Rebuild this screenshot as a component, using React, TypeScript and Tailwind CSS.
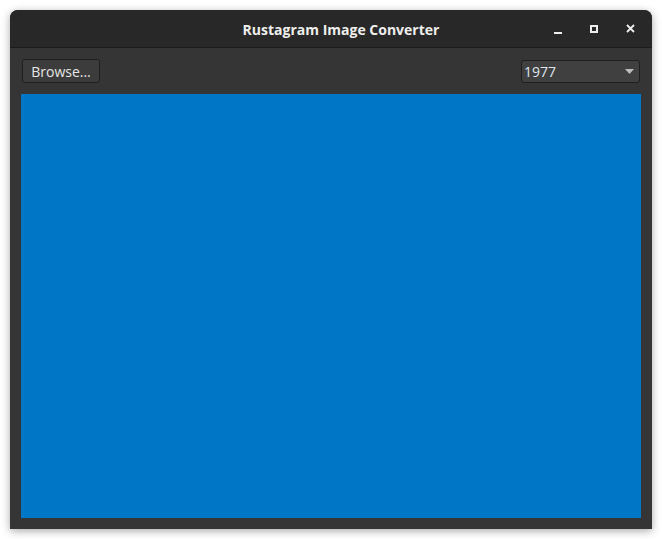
export default function App() {
  return (
    <div className="h-[539px] w-[662px] bg-white" style={{ fontFamily: '"Open Sans", "Noto Sans", sans-serif' }}>
      <div className="pl-[10px] pt-[10px]">
        <div className="flex h-[519px] w-[642px] flex-col overflow-hidden rounded-t-[8px] bg-[#353535] shadow-[0_2px_8px_rgba(0,0,0,0.35)]">
          {/* Title bar */}
          <div className="relative flex h-[38px] shrink-0 items-center justify-center border-b border-[#1c1c1c] bg-[#282828] pl-[20px] pt-[2px]">
            <span className="text-[14px] font-bold text-[#eeeeec]">Rustagram Image Converter</span>
            <div className="absolute right-[17px] top-0 flex h-[37px] items-center gap-[28px]">
              <svg width="8" height="8" viewBox="0 0 8 8" className="mt-[3px]">
                <rect x="0" y="6" width="8" height="2" fill="#eeeeec" />
              </svg>
              <svg width="8" height="8" viewBox="0 0 8 8">
                <rect x="1" y="1" width="6" height="6" fill="none" stroke="#eeeeec" strokeWidth="2" />
              </svg>
              <svg width="9" height="9" viewBox="0 0 9 9">
                <path d="M1 1 L8 8 M8 1 L1 8" stroke="#eeeeec" strokeWidth="1.8" />
              </svg>
            </div>
          </div>
          {/* Toolbar */}
          <div className="flex items-center justify-between pl-[12px] pr-[12px] pt-[11px]">
            <button className="flex h-[24px] w-[78px] items-center justify-center rounded-[3px] border border-[#1f1f1f] bg-[#3c3c3c] text-[14px] text-[#e6e6e6]">
              Browse...
            </button>
            <div className="flex h-[23px] w-[119px] items-center justify-between rounded-[3px] border border-[#1f1f1f] bg-[#404040] pl-[2px] pr-[5px] text-[14px] text-[#dfe6ee]">
              <span>1977</span>
              <svg width="9" height="5" viewBox="0 0 9 5">
                <path d="M0 0 L9 0 L4.5 5 Z" fill="#bdbdbd" />
              </svg>
            </div>
          </div>
          {/* Image area */}
          <div className="px-[11px] pt-[11px]">
            <div className="h-[424px] w-[620px] bg-[#0076c7]" />
          </div>
        </div>
      </div>
    </div>
  );
}
